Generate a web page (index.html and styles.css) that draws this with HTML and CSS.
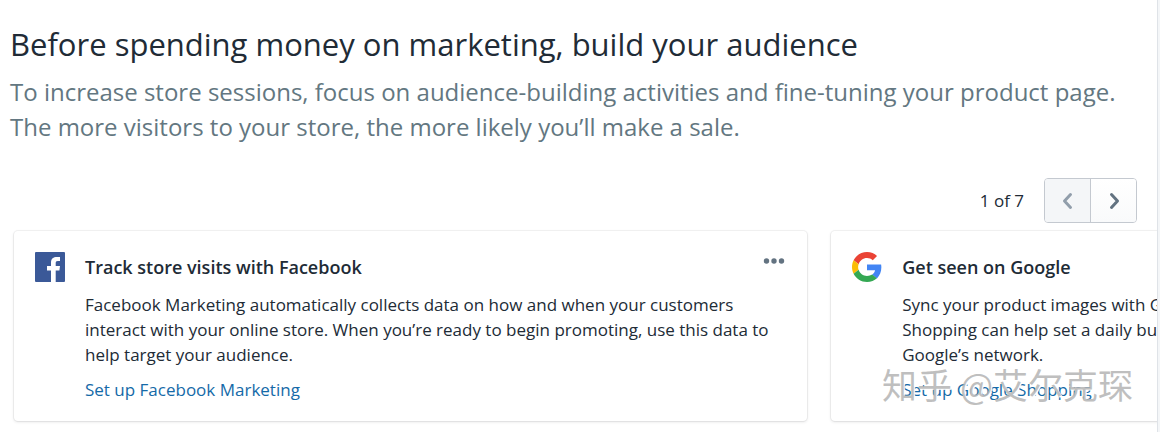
FILE: index.html
```html
<!DOCTYPE html>
<html lang="en">
<head>
    <meta charset="UTF-8">
    <meta name="viewport" content="width=device-width, initial-scale=1.0">
    <title>Build your audience</title>
    <link rel="stylesheet" href="styles.css">
</head>
<body>

<main class="page">
    <header class="intro">
        <h1>Before spending money on marketing, build your audience</h1>
        <p>To increase store sessions, focus on audience-building activities and fine-tuning your product page.<br>The more visitors to your store, the more likely you’ll make a sale.</p>
    </header>

    <nav class="pager" aria-label="Recommendations">
        <span class="pager-count">1 of 7</span>
        <div class="pager-buttons">
            <button type="button" aria-label="Previous" disabled>
                <svg width="12" height="18" viewBox="0 0 12 18"><path d="M8.500 2.500 2.500 9l6 6.500"/></svg>
            </button>
            <button type="button" aria-label="Next">
                <svg width="12" height="18" viewBox="0 0 12 18"><path d="m3.500 2.500 6 6.500-6 6.500"/></svg>
            </button>
        </div>
    </nav>

    <div class="cards">
        <article class="card">
            <svg class="card-icon" viewBox="0 0 30 30">
                <rect width="30" height="30" rx="1" fill="#3b5998"/>
                <path fill="#fff" d="M16 30V18.500h-4v-4.500h4v-3.500c0-3.900 2.400-5.600 5.900-5.600 1.600 0 2.600.1 3.100.2v4h-2.100c-1.900 0-2.200.9-2.200 2.200V14h4.300l-.6 4.500h-3.700V30z"/>
            </svg>
            <div class="card-body">
                <h2>Track store visits with Facebook</h2>
                <p>Facebook Marketing automatically collects data on how and when your customers<br>interact with your online store. When you’re ready to begin promoting, use this data to<br>help target your audience.</p>
                <a href="#">Set up Facebook Marketing</a>
            </div>
            <button type="button" class="card-menu" aria-label="More actions">
                <svg width="22" height="6" viewBox="0 0 22 6"><circle cx="3.500" cy="3" r="2.700"/><circle cx="11" cy="3" r="2.700"/><circle cx="18.500" cy="3" r="2.700"/></svg>
            </button>
        </article>

        <article class="card">
            <svg class="card-icon" viewBox="0 0 48 48">
                <path fill="#ea4335" d="M24 9.500c3.540 0 6.710 1.220 9.210 3.600l6.850-6.850C35.900 2.380 30.470 0 24 0 14.620 0 6.510 5.380 2.560 13.220l7.980 6.190C12.430 13.720 17.740 9.500 24 9.500z"/>
                <path fill="#4285f4" d="M46.980 24.550c0-1.570-.15-3.090-.38-4.550H24v9.020h12.940c-.58 2.960-2.260 5.480-4.780 7.180l7.730 6c4.510-4.180 7.090-10.360 7.090-17.650z"/>
                <path fill="#fbbc05" d="M10.530 28.590c-.48-1.450-.76-2.990-.76-4.590s.27-3.140.76-4.590l-7.980-6.190C.92 16.460 0 20.120 0 24s.92 7.540 2.560 10.780l7.970-6.190z"/>
                <path fill="#34a853" d="M24 48c6.480 0 11.930-2.130 15.890-5.810l-7.730-6c-2.150 1.450-4.920 2.300-8.160 2.300-6.260 0-11.570-4.220-13.470-9.910l-7.980 6.190C6.510 42.620 14.620 48 24 48z"/>
            </svg>
            <div class="card-body">
                <h2>Get seen on Google</h2>
                <p>Sync your product images with Google<br>Shopping can help set a daily budget<br>Google’s network.</p>
                <a href="#">Set up Google Shopping</a>
            </div>
        </article>
    </div>

    <div class="watermark">知乎 @艾尔克琛</div>
</main>

</body>
</html>
```
FILE: styles.css
```css
body {
    margin: 0;
    background: #f4f6f8;
    color: #212b36;
    font-family: "Open Sans", "Noto Sans", sans-serif;
    font-size: 17px;
    line-height: 25px;
}
h1, h2, p {
    margin: 0;
}
.page {
    position: relative;
    box-sizing: border-box;
    min-height: 100vh;
    margin-right: 2px;
    padding: 23px 0 10px;
    border-right: 1px solid #dfe3e8;
    background: white;
    overflow: hidden;
}
.intro {
    padding: 0 10px;
    white-space: nowrap;
}
.intro h1 {
    font-size: 31px;
    font-weight: 400;
    line-height: 42px;
}
.intro p {
    margin-top: 9px;
    color: #637781;
    font-size: 24px;
    line-height: 35px;
}
.pager {
    display: flex;
    align-items: center;
    justify-content: flex-end;
    gap: 20px;
    margin: 34px 20px 8px 0;
}
.pager-buttons {
    display: flex;
    border: 1px solid #c4c9d0;
    border-radius: 4px;
    overflow: hidden;
}
.pager-buttons button {
    display: flex;
    align-items: center;
    justify-content: center;
    width: 45px;
    height: 43px;
    padding: 0;
    border: 0;
    background: linear-gradient(to bottom, #fff, #f9fafb);
}
.pager-buttons button + button {
    width: 46px;
    border-left: 1px solid #c4c9d0;
}
.pager-buttons button:disabled {
    background: #f4f6f8;
}
.pager-buttons svg {
    fill: none;
    stroke: #637381;
    stroke-width: 3;
    stroke-linecap: round;
    stroke-linejoin: round;
}
.pager-buttons button:disabled svg {
    stroke: #919eab;
}
.cards {
    display: flex;
    gap: 24px;
    padding-left: 14px;
}
.card {
    display: flex;
    flex: 0 0 69.400%;
    align-items: flex-start;
    gap: 20px;
    box-sizing: border-box;
    min-width: 0;
    padding: 21px 22px 19px 21px;
    border-radius: 4px;
    box-shadow: 0 0 0 1px rgba(63, 63, 68, 0.06), 0 1px 3px rgba(63, 63, 68, 0.15);
}
.card-icon {
    flex: none;
    width: 30px;
    height: 30px;
}
.card-body {
    flex: 1;
    min-width: 0;
    white-space: nowrap;
}
.card-body h2 {
    font-size: 18px;
    font-weight: 600;
    line-height: 30px;
}
.card-body p {
    margin: 10px 0;
}
.card-body a {
    color: #156aa8;
    text-decoration: none;
}
.card-menu {
    display: flex;
    padding: 6px 0;
    border: 0;
    background: none;
}
.card-menu svg {
    fill: #637381;
}
.watermark {
    position: absolute;
    right: 24px;
    bottom: 24px;
    color: rgba(180, 180, 180, 0.85);
    font-family: "Noto Sans CJK SC", sans-serif;
    font-size: 35px;
    line-height: 48px;
    text-shadow: 1px 1px 0 white;
    pointer-events: none;
}
```
